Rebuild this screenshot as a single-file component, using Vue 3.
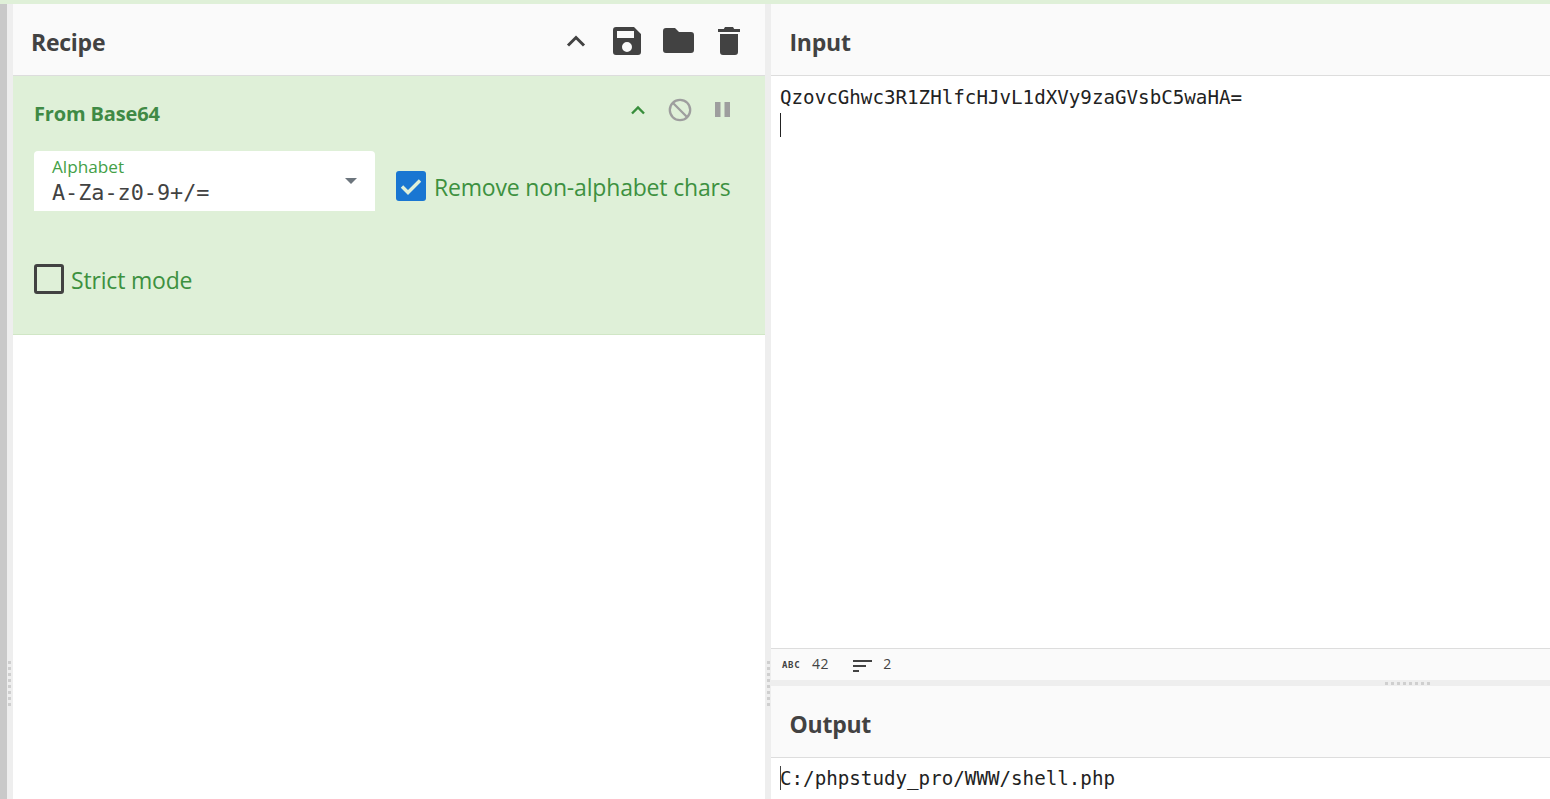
<script setup>
const stats = { length: 42, lines: 2 }
</script>

<template>
  <div class="page">
    <div class="topstrip"></div>
    <div class="body">
      <div class="rail"></div>
      <div class="vgutter">
        <div class="grip"><i v-for="n in 8" :key="n"></i></div>
      </div>
      <section class="recipe">
        <header class="phead">
          <h1>Recipe</h1>
          <div class="tools">
            <svg class="ic-chev" viewBox="0 0 24 24"><path d="M4 16.500 12 8.500l8 8" fill="none" stroke="#424242" stroke-width="3"/></svg>
            <svg class="ic" viewBox="0 0 28 28"><path fill="#424242" fill-rule="evenodd" d="M3 0h18l7 7v18a3 3 0 0 1-3 3H3a3 3 0 0 1-3-3V3a3 3 0 0 1 3-3Zm1 4v7h17V4H4Zm10 11a5 5 0 1 0 0 10 5 5 0 0 0 0-10Z"/></svg>
            <svg class="ic folder" viewBox="0 0 31 25"><path fill="#424242" d="M3 0h9l4 4h12a3 3 0 0 1 3 3v15a3 3 0 0 1-3 3H3a3 3 0 0 1-3-3V3a3 3 0 0 1 3-3Z"/></svg>
            <svg class="ic trash" viewBox="0 0 22 28"><path fill="#424242" d="M7 0h8l1.200 2H22v3H0V2h5.800L7 0ZM2 7h18v18a3 3 0 0 1-3 3H5a3 3 0 0 1-3-3V7Z"/></svg>
          </div>
        </header>
        <div class="op">
          <div class="op-head">
            <span class="op-title">From Base64</span>
            <div class="op-tools">
              <svg class="op-chev" viewBox="0 0 16 10"><path d="M2 8.500 8 2.500l6 6" fill="none" stroke="#388e3c" stroke-width="2.400"/></svg>
              <svg class="op-ban" viewBox="0 0 24 24"><circle cx="12" cy="12" r="10.200" fill="none" stroke="#9e9e9e" stroke-width="2.300"/><path d="M5 5l14 14" stroke="#9e9e9e" stroke-width="2.300"/></svg>
              <svg class="op-pause" viewBox="0 0 15 15"><path fill="#9e9e9e" d="M0 0h5.500v15H0zM9.500 0H15v15H9.500z"/></svg>
            </div>
          </div>
          <div class="row">
            <div class="select">
              <label>Alphabet</label>
              <div class="val">A-Za-z0-9+/=</div>
              <span class="caret"></span>
            </div>
            <div class="check first">
              <span class="box on">
                <svg viewBox="0 0 30 30"><path d="M6 15.500 12 21.500 24 9.500" fill="none" stroke="#dff0d8" stroke-width="3.400"/></svg>
              </span>
              <span class="clabel">Remove non-alphabet chars</span>
            </div>
          </div>
          <div class="check strict">
            <span class="box"></span>
            <span class="clabel">Strict mode</span>
          </div>
        </div>
      </section>
      <div class="vgutter">
        <div class="grip second"><i v-for="n in 8" :key="n"></i></div>
      </div>
      <section class="right">
        <header class="phead"><h1>Input</h1></header>
        <div class="input">
          <div class="code">QzovcGhwc3R1ZHlfcHJvL1dXVy9zaGVsbC5waHA=</div>
          <div class="cursor"></div>
        </div>
        <footer class="status">
          <span class="abc">ABC</span>
          <span class="num">{{ stats.length }}</span>
          <svg class="lines" viewBox="0 0 19 12"><path d="M0 1h19M0 6h13M0 11h6" stroke="#424242" stroke-width="1.800"/></svg>
          <span class="num">{{ stats.lines }}</span>
        </footer>
        <div class="hgutter"><div class="hgrip"><i v-for="n in 8" :key="n"></i></div></div>
        <header class="phead"><h1>Output</h1></header>
        <div class="output">
          <span class="outcursor"></span>
          <div class="code">C:/phpstudy_pro/WWW/shell.php</div>
        </div>
      </section>
    </div>
  </div>
</template>

<style>
html, body { margin: 0; overflow: hidden; background: #fff; }
</style>

<style scoped>
.page { width: 1550px; height: 799px; display: flex; flex-direction: column; overflow: hidden; font-family: "Open Sans", "Noto Sans", sans-serif; color: #424242; }
.topstrip { height: 4px; background: #dff0d8; flex: none; }
.body { flex: 1; display: flex; min-height: 0; }
.rail { width: 7px; background: #c9c9c9; flex: none; }
.vgutter { width: 6px; background: #eeeeee; flex: none; position: relative; }
.grip { position: absolute; top: 657px; left: 1px; width: 3px; display: flex; flex-direction: column; gap: 3px; }
.grip.second { left: 2px; }
.grip i { display: block; width: 3px; height: 3px; background: #cfcfcf; }
.recipe { width: 752px; flex: none; display: flex; flex-direction: column; }
.right { flex: 1; min-width: 0; display: flex; flex-direction: column; }
.phead { box-sizing: border-box; height: 72px; flex: none; background: #fafafa; border-bottom: 1px solid #dddddd; display: flex; align-items: center; justify-content: space-between; padding: 0 25px 0 18px; }
.right .phead { padding-left: 18.500px; }
.phead h1 { margin: 0; font-size: 23px; font-weight: 700; letter-spacing: -0.25px; color: #424242; line-height: 1; position: relative; top: 3px; }
.tools { display: flex; align-items: center; width: 176px; position: relative; top: 1px; }
.tools svg { flex: none; display: block; }
.ic-chev { width: 24px; height: 24px; margin-right: 25px; }
.ic { width: 28px; height: 28px; margin-right: 22px; }
.ic.folder { width: 31px; height: 25px; margin-right: 24px; }
.ic.trash { width: 22px; height: 28px; margin-right: 0; }
.op { height: 259px; box-sizing: border-box; background: #dff0d8; border-bottom: 1px solid #d0e6c5; padding: 0 21px; color: #388e3c; }
.op-head { display: flex; justify-content: space-between; align-items: center; height: 75px; }
.op-title { font-size: 20px; font-weight: 700; color: #3f8a45; letter-spacing: -0.15px; }
.op-tools { display: flex; align-items: center; margin-right: 14px; position: relative; top: -4px; }
.op-chev { width: 16px; height: 10px; margin-right: 22px; }
.op-ban { width: 24px; height: 24px; margin-right: 23px; }
.op-pause { width: 15px; height: 15px; }
.row { display: flex; align-items: flex-start; }
.select { position: relative; width: 341px; height: 60px; flex: none; box-sizing: border-box; background: #fff; border-radius: 4px 4px 0 0; padding: 5px 18px 0; }
.select label { display: block; font-size: 17.200px; line-height: 21px; color: #43a047; }
.val { font-family: "DejaVu Sans Mono", monospace; font-size: 21.800px; line-height: 26px; color: #424242; margin-top: 3px; }
.caret { position: absolute; right: 18px; top: 27px; width: 0; height: 0; border-left: 6px solid transparent; border-right: 6px solid transparent; border-top: 6px solid #6c757d; }
.check { display: flex; align-items: center; gap: 8px; }
.check.first { margin: 20px 0 0 21px; }
.strict { margin-top: 53px; gap: 7px; }
.box { width: 30px; height: 30px; box-sizing: border-box; border: 3px solid #424242; border-radius: 3px; flex: none; display: block; }
.box.on { background: #1976d2; border: 0; }
.box.on svg { display: block; width: 30px; height: 30px; }
.clabel { font-size: 23px; line-height: 30px; color: #3d9140; white-space: nowrap; letter-spacing: -0.18px; position: relative; top: 1px; }
.input { flex: 1; min-height: 0; padding: 10px 9px 0; background: #fff; }
.code { font-family: "DejaVu Sans Mono", monospace; font-size: 19.200px; line-height: 24px; color: #222; white-space: pre; }
.cursor { width: 1px; height: 24px; background: #222; margin-top: 3px; }
.status { height: 32px; flex: none; box-sizing: border-box; background: #fafafa; border-top: 1px solid #dddddd; display: flex; align-items: center; padding-left: 11px; }
.abc { font-family: "DejaVu Sans Mono", monospace; font-size: 9px; line-height: 1; font-weight: 700; color: #424242; width: 18px; margin-right: 12px; letter-spacing: 0.700px; position: relative; top: 1px; }
.num { font-size: 14px; color: #424242; letter-spacing: 0.6px; position: relative; top: -1px; }
.lines { width: 19px; height: 12px; margin: 0 11px 0 24px; position: relative; top: 1px; }
.hgutter { height: 6px; flex: none; background: #eeeeee; position: relative; }
.hgrip { position: absolute; left: 614px; top: 2px; display: flex; gap: 3px; }
.hgrip i { display: block; width: 3px; height: 3px; background: #cfcfcf; }
.output { height: 41px; flex: none; padding: 9px 9px 0; box-sizing: border-box; background: #fff; position: relative; overflow: hidden; }
.outcursor { position: absolute; left: 9px; top: 8px; width: 1px; height: 24px; background: #444; }
</style>
